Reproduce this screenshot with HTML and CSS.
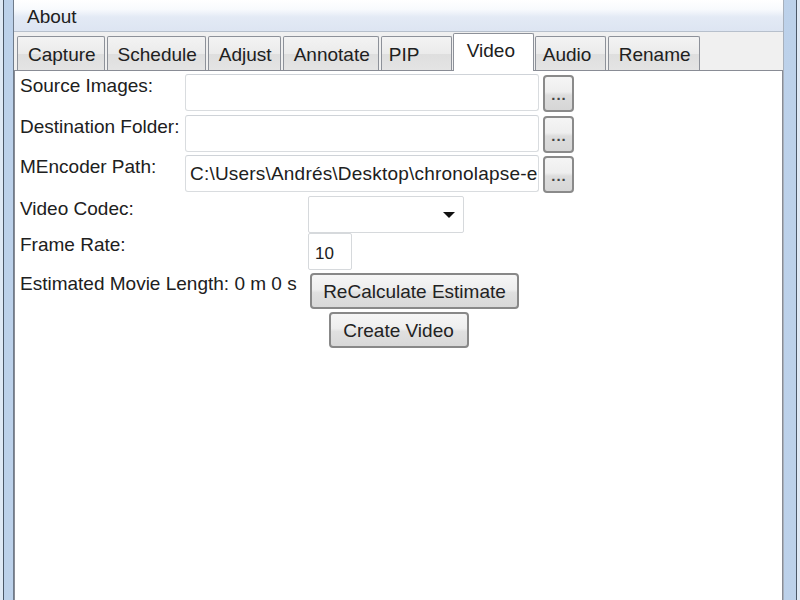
FILE: index.html
```html
<!DOCTYPE html>
<html>
<head>
<meta charset="utf-8">
<link rel="stylesheet" href="styles.css">
</head>
<body>
<div class="window">
  <div class="client">
    <div class="menubar"><span class="menu-item">About</span></div>
    <div class="tabstrip">
      <div class="tab">Capture</div>
      <div class="tab">Schedule</div>
      <div class="tab">Adjust</div>
      <div class="tab">Annotate</div>
      <div class="tab tab-wide">PIP</div>
      <div class="tab tab-active">Video</div>
      <div class="tab tab-wide">Audio</div>
      <div class="tab">Rename</div>
    </div>
    <div class="panel">
      <div class="paths">
        <div class="label">Source Images:</div>
        <div class="field"></div>
        <div class="browse">...</div>
        <div class="label">Destination Folder:</div>
        <div class="field"></div>
        <div class="browse">...</div>
        <div class="label">MEncoder Path:</div>
        <div class="field"><span class="value">C:\Users\Andrés\Desktop\chronolapse-e</span></div>
        <div class="browse">...</div>
      </div>
      <div class="settings">
        <div class="label">Video Codec:</div>
        <div class="select"><span class="arrow"></span></div>
        <div class="label">Frame Rate:</div>
        <div class="small-field">10</div>
        <div class="label label-est">Estimated Movie Length: 0 m 0 s</div>
        <div class="button btn-recalc">ReCalculate Estimate</div>
      </div>
      <div class="create-row">
        <div class="button btn-create">Create Video</div>
      </div>
    </div>
  </div>
</div>
</body>
</html>
```
FILE: styles.css
```css
* { box-sizing: border-box; }
html, body {
  margin: 0;
  padding: 0;
  width: 800px;
  height: 600px;
  overflow: hidden;
}
body {
  background: #dfe9f5;
  font-family: "Liberation Sans", Arial, sans-serif;
  font-size: 19px;
  color: #202020;
}
.window {
  height: 600px;
  margin: 0 3px 0 3px;
  border-left: 1px solid #4b5868;
  border-right: 1px solid #4b5868;
  padding: 0 12px 0 9px;
  background: linear-gradient(90deg, #bcd1ea 0%, #cfdff1 50%, #bcd1ea 100%);
  display: flex;
}
.client {
  flex: 1;
  display: flex;
  flex-direction: column;
  background: #f0f0f0;
  border-left: 1px solid #6f7b8a;
  border-right: 1px solid #a7b0bc;
}
.menubar {
  height: 32px;
  flex: none;
  background: linear-gradient(#ffffff 0%, #f8fafd 30%, #e3eaf5 55%, #dde5f2 100%);
  border-bottom: 1px solid #b7c0cc;
  padding-left: 13px;
  display: flex;
  align-items: center;
}
.menu-item {
  line-height: 22px;
  padding-top: 2px;
}
.tabstrip {
  height: 38px;
  flex: none;
  display: flex;
  align-items: flex-end;
  padding-left: 3px;
  gap: 2px;
  position: relative;
  z-index: 1;
}
.tab {
  height: 34px;
  padding: 2px 8px 0 10px;
  border: 1px solid #8d9199;
  border-bottom: none;
  border-radius: 2px 2px 0 0;
  background: linear-gradient(#f3f3f3 0%, #ebebeb 50%, #dedede 51%, #e4e4e4 100%);
  display: flex;
  align-items: center;
}
.tab-wide {
  min-width: 71px;
  padding-left: 7px;
}
.tab-active {
  height: 38px;
  width: 81px;
  margin-bottom: -1px;
  background: #ffffff;
  padding: 0 0 4px 13px;
  margin-left: -1px;
  margin-right: -1px;
}
.panel {
  flex: 1;
  background: #ffffff;
  border: 1px solid #898c95;
  border-bottom: none;
  padding: 3px 0 0 5px;
}
.paths {
  display: grid;
  grid-template-columns: 161px 354px 31px;
  grid-auto-rows: 37px;
  column-gap: 4px;
  row-gap: 3.5px;
}
.label {
  line-height: 24px;
  white-space: nowrap;
}
.field {
  border: 1px solid #d9dcdf;
  border-top-color: #cfd3d8;
  border-radius: 3px;
  background: #fff;
  overflow: hidden;
  white-space: nowrap;
  padding: 0 2px 0 4px;
  display: flex;
  align-items: center;
}
.value {
  padding-top: 1px;
  letter-spacing: 0.2px;
}
.browse {
  margin-top: 1px;
  height: 37px;
  border: 2px solid #8a8a8a;
  border-radius: 4px;
  background: linear-gradient(#f5f5f5 0%, #eeeeee 45%, #dddddd 55%, #d6d6d6 100%);
  font-size: 15px;
  font-weight: bold;
  letter-spacing: 1px;
  color: #444;
  display: flex;
  justify-content: center;
  align-items: flex-end;
  padding-bottom: 7px;
  padding-left: 1px;
}
.settings {
  margin-top: 4px;
  display: grid;
  grid-template-columns: 288px auto;
  grid-template-rows: 37px 37px 36px;
  justify-items: start;
}
.select {
  width: 156px;
  height: 37px;
  border: 1px solid #d6d9dc;
  border-radius: 2px;
  background: #fff;
  position: relative;
}
.arrow {
  position: absolute;
  right: 8px;
  top: 15px;
  width: 0;
  height: 0;
  border-left: 6px solid transparent;
  border-right: 6px solid transparent;
  border-top: 6px solid #111;
}
.small-field {
  width: 44px;
  height: 37px;
  border: 1px solid #d6d9dc;
  border-radius: 2px;
  background: #fff;
  padding: 9px 0 0 6px;
  font-size: 17px;
  line-height: 22px;
}
.label-est {
  line-height: 22px;
  margin-top: 3px;
}
.settings .label:first-child { padding-top: 1px; }
.button {
  border: 2px solid #888888;
  border-radius: 4px;
  background: linear-gradient(#f6f6f6 0%, #eeeeee 45%, #e0e0e0 55%, #d8d8d8 100%);
  display: flex;
  align-items: center;
  justify-content: center;
  white-space: nowrap;
  color: #222;
}
.btn-recalc {
  margin-top: 3px;
  margin-left: 2px;
  width: 209px;
  height: 36px;
  padding-top: 1px;
}
.create-row {
  display: flex;
  justify-content: center;
  padding-right: 5px;
  margin-top: 6px;
}
.btn-create {
  width: 140px;
  height: 36px;
  padding-top: 1px;
}
```
